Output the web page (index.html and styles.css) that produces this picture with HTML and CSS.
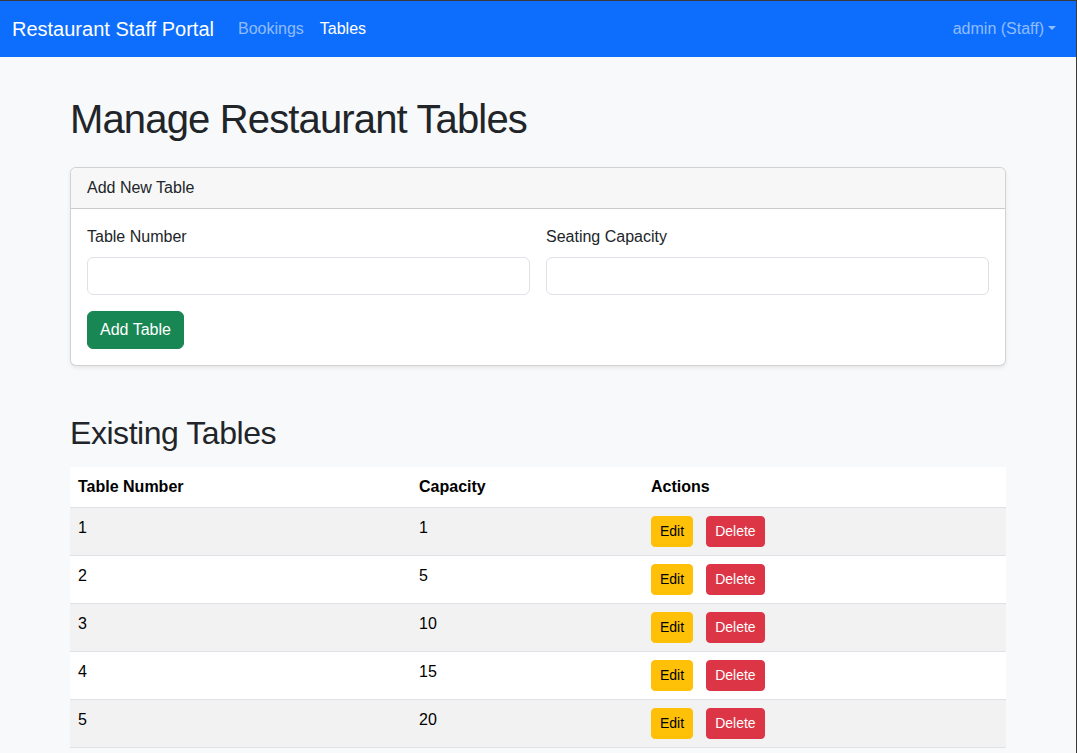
FILE: index.html
```html
<!DOCTYPE html>
<html lang="en">
<head>
<meta charset="utf-8">
<title>Manage Restaurant Tables</title>
<link rel="stylesheet" href="styles.css">
</head>
<body>
<div class="frame">
  <nav class="navbar">
    <a class="brand" href="#">Restaurant Staff Portal</a>
    <ul class="nav-links">
      <li><a class="nav-link" href="#">Bookings</a></li>
      <li><a class="nav-link active" href="#">Tables</a></li>
    </ul>
    <a class="nav-link user" href="#">admin (Staff)<span class="caret"></span></a>
  </nav>

  <main class="container">
    <h1 class="page-title">Manage Restaurant Tables</h1>

    <section class="card">
      <div class="card-header">Add New Table</div>
      <div class="card-body">
        <div class="form-row">
          <div class="field">
            <label class="label">Table Number</label>
            <input class="input" type="text">
          </div>
          <div class="field">
            <label class="label">Seating Capacity</label>
            <input class="input" type="text">
          </div>
        </div>
        <button class="btn btn-success">Add Table</button>
      </div>
    </section>

    <h2 class="section-title">Existing Tables</h2>

    <table class="table">
      <thead>
        <tr><th class="col-num">Table Number</th><th class="col-cap">Capacity</th><th>Actions</th></tr>
      </thead>
      <tbody>
        <tr><td>1</td><td>1</td><td><button class="btn-sm btn-warning">Edit</button><button class="btn-sm btn-danger">Delete</button></td></tr>
        <tr><td>2</td><td>5</td><td><button class="btn-sm btn-warning">Edit</button><button class="btn-sm btn-danger">Delete</button></td></tr>
        <tr><td>3</td><td>10</td><td><button class="btn-sm btn-warning">Edit</button><button class="btn-sm btn-danger">Delete</button></td></tr>
        <tr><td>4</td><td>15</td><td><button class="btn-sm btn-warning">Edit</button><button class="btn-sm btn-danger">Delete</button></td></tr>
        <tr><td>5</td><td>20</td><td><button class="btn-sm btn-warning">Edit</button><button class="btn-sm btn-danger">Delete</button></td></tr>
      </tbody>
    </table>
  </main>
</div>
</body>
</html>
```

FILE: styles.css
```css
* { box-sizing: border-box; }
html, body {
  margin: 0;
  padding: 0;
  height: 100%;
}
body {
  font-family: "Liberation Sans", Arial, sans-serif;
  font-size: 16px;
  line-height: 1.5;
  color: #212529;
  background: #f8f9fa;
  overflow: hidden;
}
.frame {
  min-height: 100%;
  border-top: 1px solid #3a3a3a;
  border-right: 1px solid #3a3a3a;
  background: #f8f9fa;
}
.navbar {
  display: flex;
  align-items: center;
  height: 56px;
  padding: 8px 12px;
  background: #0d6efd;
}
.brand {
  color: #fff;
  font-size: 20px;
  line-height: 30px;
  text-decoration: none;
  margin-right: 16px;
}
.nav-links {
  display: flex;
  list-style: none;
  margin: 0;
  padding: 0;
}
.nav-link {
  display: block;
  padding: 8px;
  color: rgba(255,255,255,.55);
  text-decoration: none;
  line-height: 24px;
}
.nav-link.active { color: #fff; }
.user {
  margin-left: auto;
  display: flex;
  align-items: center;
}
.caret {
  display: inline-block;
  margin-left: 4px;
  border-top: 4px solid rgba(255,255,255,.55);
  border-left: 4px solid transparent;
  border-right: 4px solid transparent;
  margin-top: -2px;
}
.container {
  width: 960px;
  margin: 0 auto;
  padding: 38px 12px 0;
}
.page-title {
  margin: 0 0 24px;
  font-size: 40px;
  font-weight: 400;
  line-height: 1.2;
  letter-spacing: -0.85px;
}
.card {
  background: #fff;
  border: 1px solid rgba(0,0,0,.175);
  border-radius: 6px;
  box-shadow: 0 2px 4px rgba(0,0,0,.075);
  margin-bottom: 48px;
}
.card-header {
  padding: 8px 16px;
  background: #f7f7f7;
  border-bottom: 1px solid rgba(0,0,0,.175);
  border-radius: 5px 5px 0 0;
  font-size: 16px;
  line-height: 24px;
}
.card-body { padding: 16px; }
.form-row {
  display: grid;
  grid-template-columns: 1fr 1fr;
  column-gap: 16px;
  margin-bottom: 16px;
}
.label {
  display: block;
  margin-bottom: 8px;
  line-height: 24px;
}
.input {
  display: block;
  width: 100%;
  height: 38px;
  border: 1px solid #dee2e6;
  border-radius: 6px;
  background: #fff;
  padding: 6px 12px;
  font: inherit;
}
.btn {
  font: inherit;
  font-size: 16px;
  line-height: 24px;
  padding: 6px 12px;
  border: 1px solid transparent;
  border-radius: 6px;
  cursor: pointer;
}
.btn-success {
  background: #198754;
  border-color: #198754;
  color: #fff;
}
.section-title {
  margin: 0 0 15px;
  font-size: 32px;
  font-weight: 400;
  line-height: 1.2;
  letter-spacing: -0.45px;
}
.table {
  width: 100%;
  border-collapse: collapse;
  background: #fff;
  color: #000;
}
.table th, .table td {
  text-align: left;
  vertical-align: top;
  padding: 8px;
  line-height: 24px;
  border-bottom: 1px solid #dee2e6;
}
.table th { font-weight: 700; }
.col-num { width: 341px; }
.col-cap { width: 232px; }
.table tbody tr:nth-child(odd) td { background: #f2f2f2; }
.btn-sm {
  font-family: inherit;
  font-size: 14px;
  line-height: 21px;
  padding: 4px 8px;
  border: 1px solid transparent;
  border-radius: 4px;
  cursor: pointer;
  margin-right: 13px;
  vertical-align: top;
}
.btn-warning {
  background: #ffc107;
  border-color: #ffc107;
  color: #000;
}
.btn-danger {
  background: #dc3545;
  border-color: #dc3545;
  color: #fff;
}
```
